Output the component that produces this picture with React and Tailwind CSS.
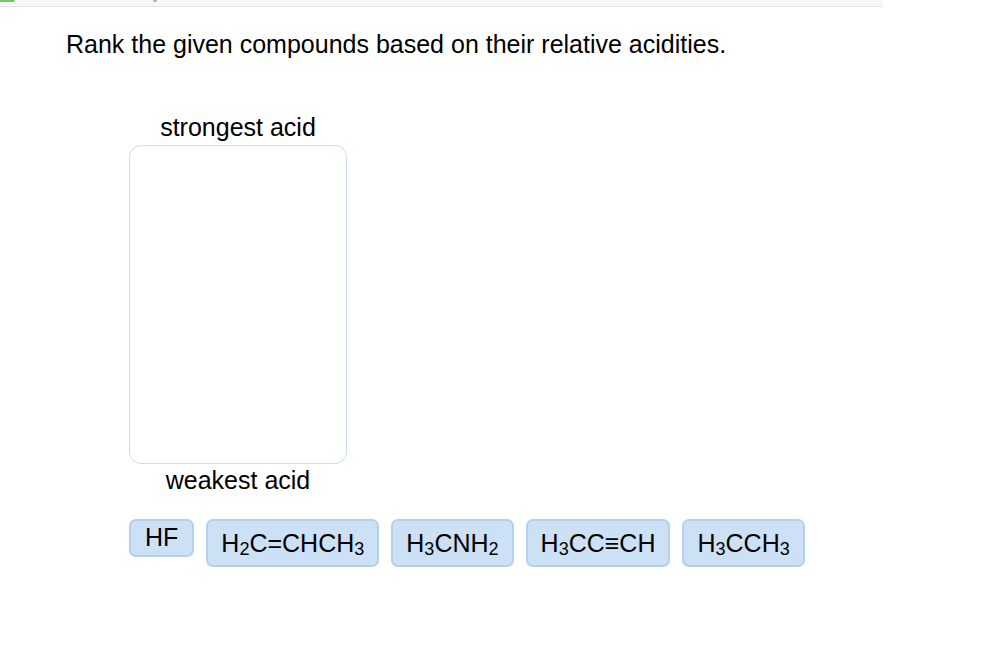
import React from 'react';

const chips = [
  { id: 'hf', parts: ['HF'] },
  { id: 'propene', parts: ['H', ['2'], 'C=CHCH', ['3']] },
  { id: 'methylamine', parts: ['H', ['3'], 'CNH', ['2']] },
  { id: 'propyne', parts: ['H', ['3'], 'CC≡CH'] },
  { id: 'ethane', parts: ['H', ['3'], 'CCH', ['3']] },
];

// strings render as-is, one-element arrays as subscripts
const Formula = ({ parts }) => (
  <span>
    {parts.map((p, i) =>
      Array.isArray(p) ? (
        <sub key={i} className="text-[0.72em] relative top-[0.14em] align-baseline">{p[0]}</sub>
      ) : (
        <span key={i}>{p}</span>
      )
    )}
  </span>
);

export default function App() {
  return (
    <div className="min-h-screen bg-white text-black font-['Liberation_Sans',Arial,sans-serif] relative">
      {/* toolbar strip at the top */}
      <div className="w-[883px] h-[7px] bg-[#f7f7f7] border-b border-[#e4e4e4] relative">
        <div className="absolute left-0 top-0 w-[15px] h-[2px] bg-[#7cc46a] rounded-br" />
        <div className="absolute left-[153px] top-0 w-[4px] h-[2px] border border-[#aaa] rounded-b-sm" />
      </div>

      <div className="pl-[66px] pt-[22px]">
        <h1 className="text-[25px] leading-[30px]">Rank the given compounds based on their relative acidities.</h1>
      </div>

      <div className="pl-[129px] pt-[53px]">
        <div className="w-[218px] flex flex-col items-center">
          <div className="text-[25px] leading-[30px] mb-[3px]">strongest acid</div>
          <div className="w-[218px] h-[319px] border border-[#c9def2] rounded-[12px]" />
          <div className="text-[25px] leading-[30px] mt-[1px]">weakest acid</div>
        </div>

        <div className="flex items-start gap-[12px] mt-[24px]">
          {chips.map((c) => (
            <div
              key={c.id}
              className={`bg-[#cde1f6] border-2 border-[#b3d0ef] rounded-[7px] text-[25px] leading-[28px] ${
                c.parts.length > 1 ? 'px-[13px] pt-[8px] pb-[8px]' : 'px-[14px] pt-[2px] pb-[4px]'
              }`}
            >
              <Formula parts={c.parts} />
            </div>
          ))}
        </div>
      </div>
    </div>
  );
}
